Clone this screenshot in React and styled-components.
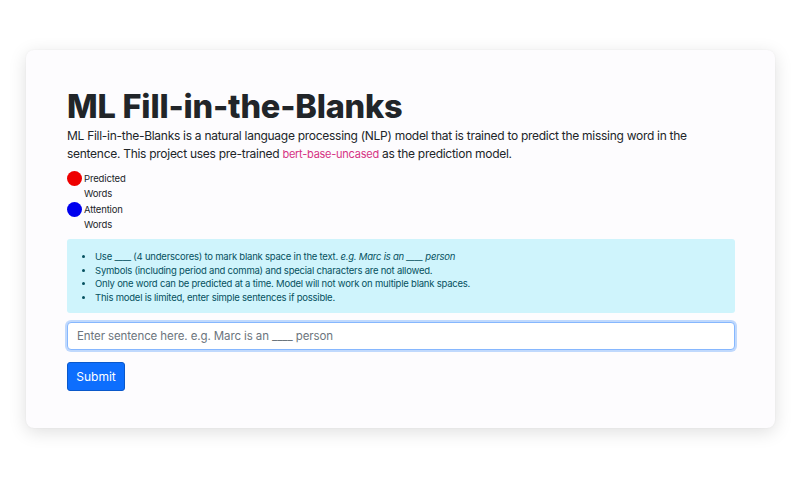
import React from "react";
import styled, { createGlobalStyle } from "styled-components";

const Global = createGlobalStyle`
  html, body { margin: 0; padding: 0; background: #ffffff; }
  body { font-family: Inter, "Noto Sans", sans-serif; color: #212529; }
  * { box-sizing: border-box; }
`;

const Page = styled.div`
  width: 800px;
  height: 483px;
  padding: 50px 25px 0 26px;
`;

const Card = styled.div`
  width: 749px;
  height: 378px;
  background: #fdfcfe;
  border-radius: 8px;
  box-shadow: 0 4px 18px rgba(0, 0, 0, 0.13), 0 0 2px rgba(0, 0, 0, 0.05);
  padding: 37px 40px 0 41px;
  display: flex;
  flex-direction: column;
`;

const Title = styled.h1`
  margin: 0;
  font-size: 32.5px;
  font-weight: 800;
  letter-spacing: -0.2px;
  line-height: 40px;
  color: #212529;
`;

const Lead = styled.p`
  margin: 0;
  font-size: 12px;
  line-height: 17.5px;
  letter-spacing: -0.28px;
  color: #212529;
`;

const Code = styled.code`
  font-family: Inter, "Noto Sans", sans-serif;
  font-size: 11px;
  letter-spacing: -0.25px;
  color: #d63384;
`;

const Legend = styled.div`
  display: flex;
  flex-direction: column;
  gap: 1px;
  margin-top: 8px;
`;

const LegendItem = styled.div`
  display: flex;
  align-items: flex-start;
  gap: 2px;
`;

const Dot = styled.span`
  width: 15px;
  height: 15px;
  border-radius: 50%;
  background: ${(p) => p.$color};
  flex: none;
`;

const LegendLabel = styled.span`
  font-size: 9.5px;
  line-height: 15px;
  letter-spacing: -0.15px;
  width: 50px;
  color: #212529;
`;

const Alert = styled.div`
  margin-top: 7px;
  background: #cff4fc;
  border-radius: 3px;
  padding: 11px 10px 9px 0;
  color: #055160;
`;

const List = styled.ul`
  margin: 0;
  padding-left: 28px;
  font-size: 9.5px;
  line-height: 13.5px;
  letter-spacing: -0.22px;
  color: #055160;
`;

const Input = styled.input`
  margin-top: 9px;
  width: 668px;
  height: 28px;
  border: 1px solid #86b7fe;
  border-radius: 4px;
  box-shadow: 0 0 0 2px rgba(13, 110, 253, 0.25);
  padding: 0 9px;
  font-family: Inter, "Noto Sans", sans-serif;
  font-size: 11.5px;
  letter-spacing: -0.1px;
  color: #212529;
  background: #fff;
  outline: none;
  &::placeholder { color: #6c757d; }
`;

const Button = styled.button`
  margin-top: 12px;
  align-self: flex-start;
  width: 58px;
  height: 29px;
  background: #0d6efd;
  color: #fff;
  border: 1px solid #0a58ca;
  border-radius: 3px;
  font-family: Inter, "Noto Sans", sans-serif;
  font-size: 12px;
  padding: 0;
`;

export default function App() {
  return (
    <>
      <Global />
      <Page>
        <Card>
          <Title>ML Fill-in-the-Blanks</Title>
          <Lead>
            ML Fill-in-the-Blanks is a natural language processing (NLP) model that is trained to predict the missing word in the
            sentence. This project uses pre-trained <Code>bert-base-uncased</Code> as the prediction model.
          </Lead>
          <Legend>
            <LegendItem>
              <Dot $color="#ee0000" />
              <LegendLabel>Predicted Words</LegendLabel>
            </LegendItem>
            <LegendItem>
              <Dot $color="#0000ee" />
              <LegendLabel>Attention Words</LegendLabel>
            </LegendItem>
          </Legend>
          <Alert>
            <List>
              <li>Use ____ (4 underscores) to mark blank space in the text. <em>e.g. Marc is an ____ person</em></li>
              <li>Symbols (including period and comma) and special characters are not allowed.</li>
              <li>Only one word can be predicted at a time. Model will not work on multiple blank spaces.</li>
              <li>This model is limited, enter simple sentences if possible.</li>
            </List>
          </Alert>
          <Input placeholder="Enter sentence here. e.g. Marc is an ____ person" />
          <Button>Submit</Button>
        </Card>
      </Page>
    </>
  );
}
